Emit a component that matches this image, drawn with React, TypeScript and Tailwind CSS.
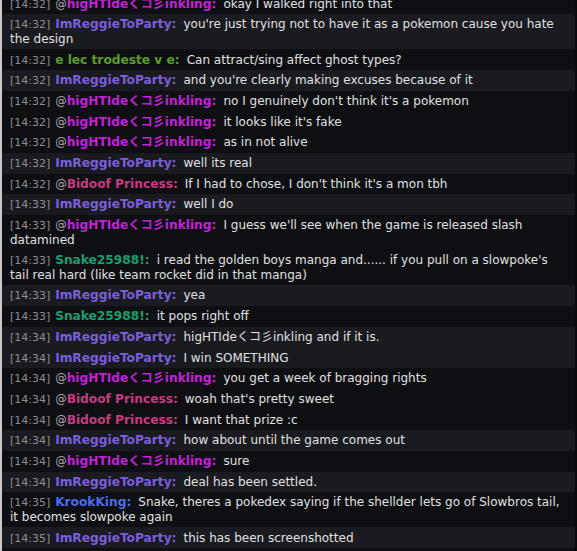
import React from 'react';

type Msg = {
  time: string;
  user: string;
  color: string;
  text: string;
  mention?: boolean;
  hl?: boolean;
};

const TIDE = 'higHTIdeくコ彡inkling';

const messages: Msg[] = [
  { time: '14:32', user: TIDE, color: 'text-[#c321d8]', mention: true, text: 'okay I walked right into that' },
  { time: '14:32', user: 'ImReggieToParty', color: 'text-[#7b5fd9]', hl: true, text: "you're just trying not to have it as a pokemon cause you hate the design" },
  { time: '14:32', user: 'e lec trodeste v e', color: 'text-[#5a9e2c]', text: 'Can attract/sing affect ghost types?' },
  { time: '14:32', user: 'ImReggieToParty', color: 'text-[#7b5fd9]', hl: true, text: "and you're clearly making excuses because of it" },
  { time: '14:32', user: TIDE, color: 'text-[#c321d8]', mention: true, text: "no I genuinely don't think it's a pokemon" },
  { time: '14:32', user: TIDE, color: 'text-[#c321d8]', mention: true, text: "it looks like it's fake" },
  { time: '14:32', user: TIDE, color: 'text-[#c321d8]', mention: true, text: 'as in not alive' },
  { time: '14:32', user: 'ImReggieToParty', color: 'text-[#7b5fd9]', hl: true, text: 'well its real' },
  { time: '14:32', user: 'Bidoof Princess', color: 'text-[#c93b80]', mention: true, text: "If I had to chose, I don't think it's a mon tbh" },
  { time: '14:33', user: 'ImReggieToParty', color: 'text-[#7b5fd9]', hl: true, text: 'well I do' },
  { time: '14:33', user: TIDE, color: 'text-[#c321d8]', mention: true, text: "I guess we'll see when the game is released slash datamined" },
  { time: '14:33', user: 'Snake25988!', color: 'text-[#1a9e6e]', text: "i read the golden boys manga and...... if you pull on a slowpoke's tail real hard (like team rocket did in that manga)" },
  { time: '14:33', user: 'ImReggieToParty', color: 'text-[#7b5fd9]', hl: true, text: 'yea' },
  { time: '14:33', user: 'Snake25988!', color: 'text-[#1a9e6e]', text: 'it pops right off' },
  { time: '14:34', user: 'ImReggieToParty', color: 'text-[#7b5fd9]', hl: true, text: 'higHTIdeくコ彡inkling and if it is.' },
  { time: '14:34', user: 'ImReggieToParty', color: 'text-[#7b5fd9]', hl: true, text: 'I win SOMETHING' },
  { time: '14:34', user: TIDE, color: 'text-[#c321d8]', mention: true, text: 'you get a week of bragging rights' },
  { time: '14:34', user: 'Bidoof Princess', color: 'text-[#c93b80]', mention: true, text: "woah that's pretty sweet" },
  { time: '14:34', user: 'Bidoof Princess', color: 'text-[#c93b80]', mention: true, text: 'I want that prize :c' },
  { time: '14:34', user: 'ImReggieToParty', color: 'text-[#7b5fd9]', hl: true, text: 'how about until the game comes out' },
  { time: '14:34', user: TIDE, color: 'text-[#c321d8]', mention: true, text: 'sure' },
  { time: '14:34', user: 'ImReggieToParty', color: 'text-[#7b5fd9]', hl: true, text: 'deal has been settled.' },
  { time: '14:35', user: 'KrookKing', color: 'text-[#4a6de8]', text: 'Snake, theres a pokedex saying if the shellder lets go of Slowbros tail, it becomes slowpoke again' },
  { time: '14:35', user: 'ImReggieToParty', color: 'text-[#7b5fd9]', hl: true, text: 'this has been screenshotted' },
];

function ChatLine({ m }: { m: Msg }) {
  return (
    <div className={`pl-2 pr-[10px] py-[3.1px] ${m.hl ? 'bg-[#1a1b20]' : 'bg-[#0e0f13]'}`}>
      <span className="text-[11px] leading-none text-[#8d8d8d]">[{m.time}]</span>{' '}
      {m.mention && <span className="ml-[1px] text-[11.5px] leading-none text-[#ababab]">@</span>}
      <span className={`text-[12.2px] font-bold ${m.color} ${m.mention ? '' : 'ml-[1px]'}`}>{m.user}:</span>
      <span className="ml-[7px] text-[#e0e0e0]">{m.text}</span>
    </div>
  );
}

export default function App() {
  return (
    <div
      className="h-[551px] w-[577px] overflow-hidden border-l-2 border-l-[#c9c9c9] border-r-2 border-r-[#08090b] bg-[#0e0f13] text-[12px] leading-[14.5px]"
      style={{ fontFamily: '"DejaVu Sans", Verdana, "Noto Sans CJK JP", sans-serif' }}
    >
      <div className="-mt-[6.4px]">
        {messages.map((m, i) => (
          <ChatLine key={i} m={m} />
        ))}
      </div>
    </div>
  );
}
